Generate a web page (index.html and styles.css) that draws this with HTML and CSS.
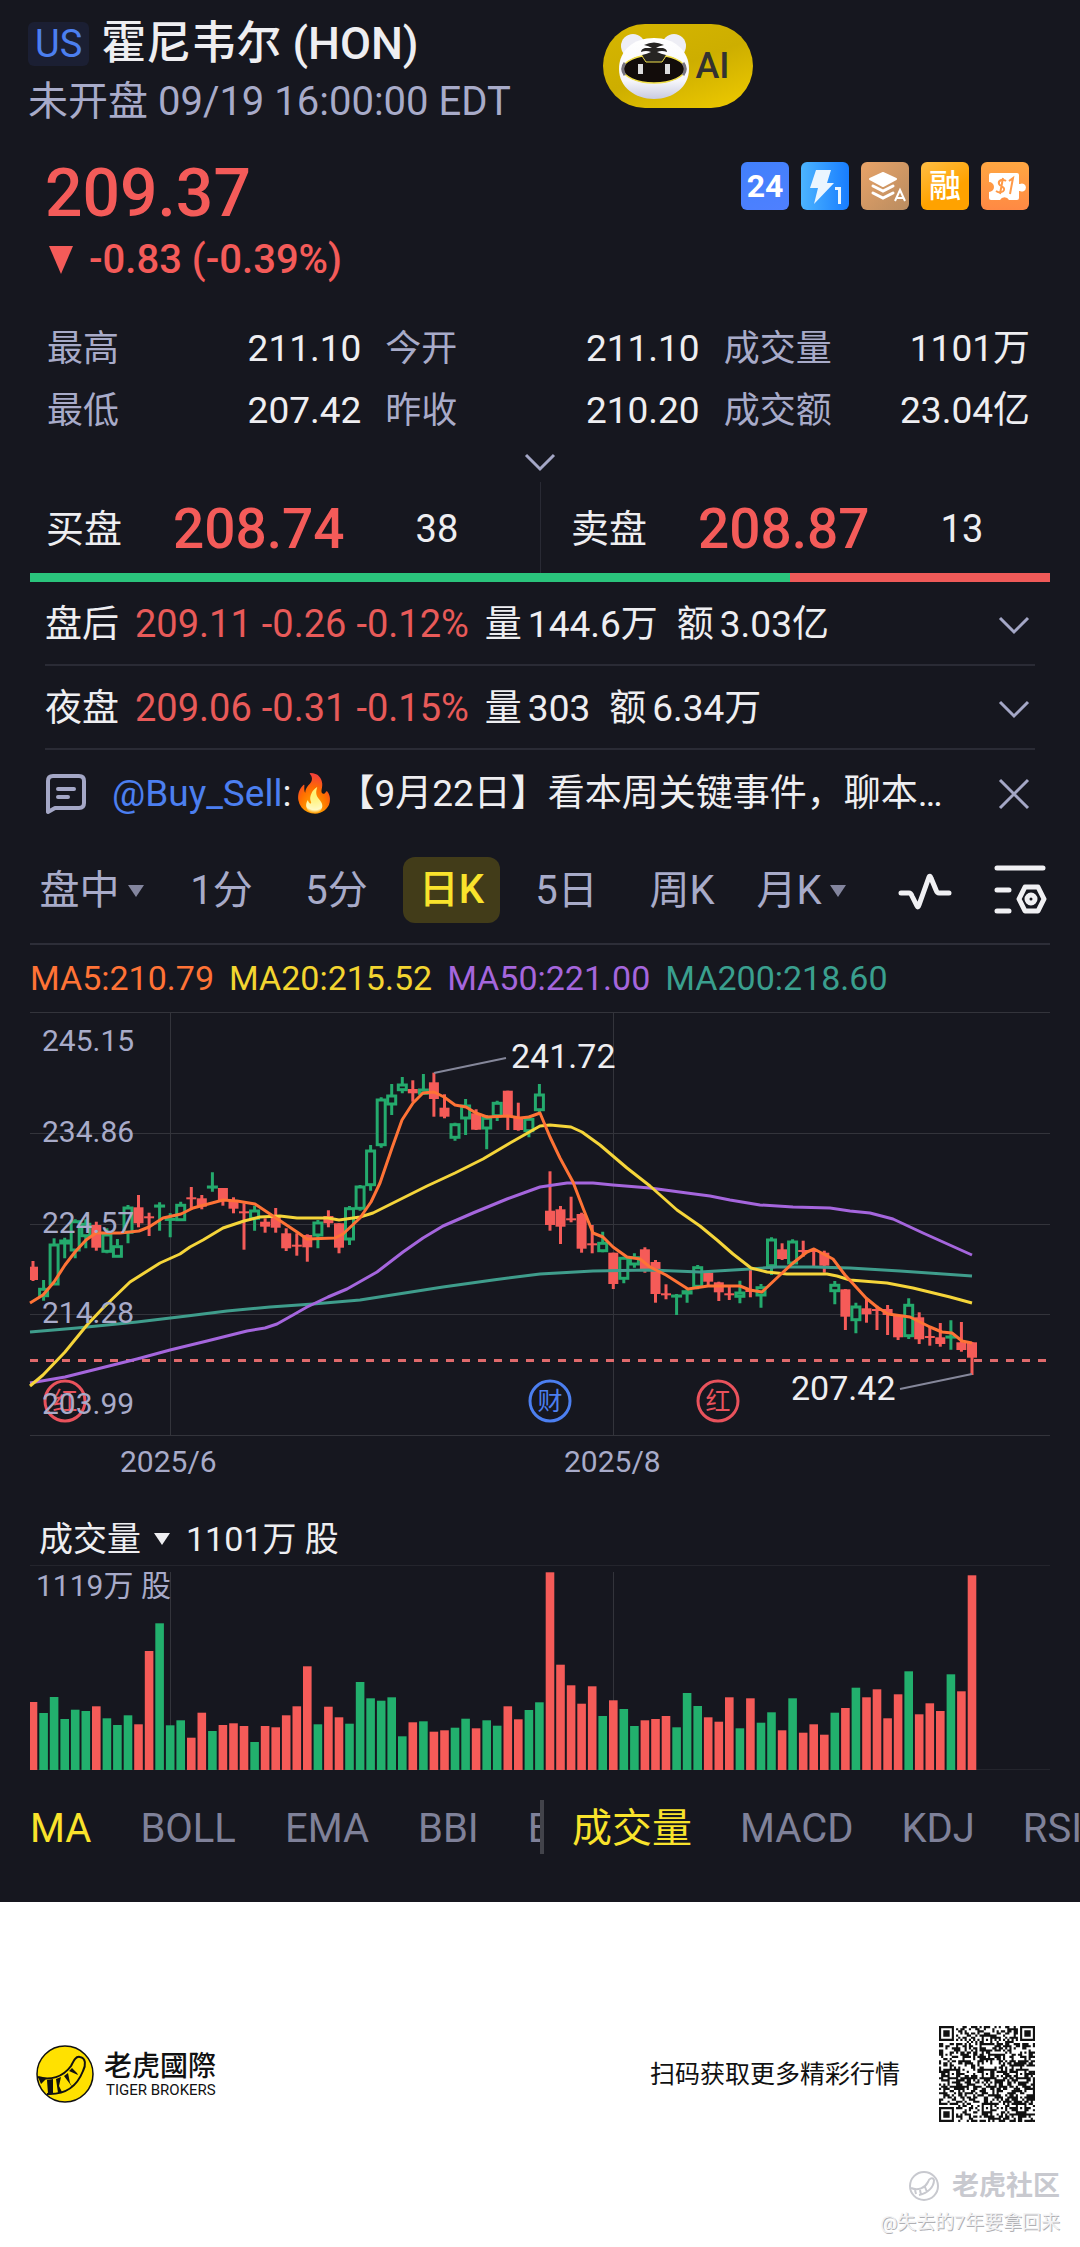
FILE: index.html
```html
<!DOCTYPE html>
<html lang="zh-CN">
<head>
<meta charset="utf-8">
<meta name="viewport" content="width=device-width, initial-scale=1">
<title>霍尼韦尔 (HON)</title>
<link rel="stylesheet" href="styles.css">
</head>
<body>
<main class="app">
  <header class="header">
    <div class="heading">
      <h1 class="title"><span class="market">US</span>霍尼韦尔 (HON)</h1>
      <p class="session">未开盘 09/19 16:00:00 EDT</p>
    </div>
    <button class="ai" type="button">
      <svg class="ai-face" viewBox="0 0 72 68" aria-hidden="true">
        <defs>
          <linearGradient id="fur" x1="0" y1="0" x2="0" y2="1"><stop offset="0" stop-color="#fff"/><stop offset=".7" stop-color="#f6f6fb"/><stop offset="1" stop-color="#c9cbe0"/></linearGradient>
        </defs>
        <circle cx="15" cy="14" r="12" fill="#eeeef5"/><circle cx="56" cy="14" r="12" fill="#eeeef5"/>
        <path d="M36 6c20 0 35 12 35 31 0 18-16 30-35 30S1 55 1 37C1 18 16 6 36 6z" fill="url(#fur)"/>
        <ellipse cx="36" cy="37" rx="31" ry="14" fill="#120c0a" stroke="#f1e04a" stroke-width="1.5"/>
        <path d="M7 31c-3 4-3 8 0 12M65 31c3 4 3 8 0 12" stroke="#77737c" stroke-width="3" fill="none"/>
        <path d="M24 24h24l-4 6H28z" fill="#222" stroke="#f1e04a" stroke-width="1"/>
        <path d="M26 13q10-5 20 0-5 1-8 3h7q4 1 4 4-5-2-10 0 4 2 9 3l-4 5H28l-4-5q5-1 9-3-5-2-10 0 0-3 4-4h7q-3-2-8-3z" fill="#262422"/>
        <path d="M20 32h5v10h-5zM47 32h5v10h-5z" fill="#dcdcdc"/>
      </svg>AI
    </button>
  </header>

  <section class="quote">
    <div>
      <p class="price">209.37</p>
      <p class="change"><svg class="drop" viewBox="0 0 26 30" aria-hidden="true"><path d="M1 1h24L13 29z"/></svg>-0.83 (-0.39%)</p>
    </div>
    <ul class="badges">
      <li class="badge badge-hours">24</li>
      <li class="badge badge-level">
        <svg viewBox="0 0 48 48" aria-hidden="true"><path d="M15 8h15l-4 13h7L13 42l4-16H9z" fill="#eaf5ff"/><path d="M34 25h6v17h-3V28h-3z" fill="#eaf5ff"/></svg>
      </li>
      <li class="badge badge-depth">
        <svg viewBox="0 0 48 48" aria-hidden="true"><path d="M22 11l13 6-13 7-13-7z" fill="#fff" stroke="#fff" stroke-width="2" stroke-linejoin="round"/><path d="M12 24l10 5 10-5M12 31l10 5 10-5" fill="none" stroke="#fff" stroke-width="3" stroke-linecap="round"/><path d="M34 39l5-11 5 11M36 36h6" fill="none" stroke="#fff" stroke-width="2"/></svg>
      </li>
      <li class="badge badge-margin">融</li>
      <li class="badge badge-fraction">
        <svg viewBox="0 0 48 48" aria-hidden="true"><path d="M8 13q0-2 2-2h26q2 0 2 2v9h1a4 4 0 1 1 0 7h-1v7q0 2-2 2h-8a5 5 0 0 0-9 0h-9q-2 0-2-2v-6a5 5 0 0 0 0-10z" fill="#fff"/><path d="M25 19c-4-3-8 0-7 3s6 2 5 6c-1 3-5 3-8 1M22 16l-3 16M28 19l4-3-3 16" fill="none" stroke="#ff9a48" stroke-width="2"/></svg>
      </li>
    </ul>
  </section>

  <dl class="stats">
    <div class="stat"><dt>最高</dt><dd>211.10</dd></div>
    <div class="stat"><dt>今开</dt><dd>211.10</dd></div>
    <div class="stat"><dt>成交量</dt><dd>1101万</dd></div>
    <div class="stat"><dt>最低</dt><dd>207.42</dd></div>
    <div class="stat"><dt>昨收</dt><dd>210.20</dd></div>
    <div class="stat"><dt>成交额</dt><dd>23.04亿</dd></div>
  </dl>
  <button class="icon-button expand" type="button" aria-label="展开"><svg class="chevron" viewBox="0 0 32 20" aria-hidden="true"><path d="M2 3l14 14L30 3"/></svg></button>

  <section class="book">
    <div class="side"><span class="side-name">买盘</span><span class="side-price">208.74</span><span class="side-size">38</span></div>
    <div class="side side-ask"><span class="side-name">卖盘</span><span class="side-price">208.87</span><span class="side-size">13</span></div>
  </section>
  <div class="ratio"><span class="ratio-bid" style="width:74.5%"></span></div>

  <section class="extra">
    <div class="row">
      <span>盘后</span><span class="down">209.11</span><span class="down">-0.26</span><span class="down">-0.12%</span>
      <span class="pair">量<b>144.6万</b></span><span class="pair">额<b>3.03亿</b></span>
      <button class="icon-button row-end" type="button" aria-label="展开盘后"><svg class="chevron" viewBox="0 0 32 20" aria-hidden="true"><path d="M2 3l14 14L30 3"/></svg></button>
    </div>
    <div class="row">
      <span>夜盘</span><span class="down">209.06</span><span class="down">-0.31</span><span class="down">-0.15%</span>
      <span class="pair">量<b>303</b></span><span class="pair">额<b>6.34万</b></span>
      <button class="icon-button row-end" type="button" aria-label="展开夜盘"><svg class="chevron" viewBox="0 0 32 20" aria-hidden="true"><path d="M2 3l14 14L30 3"/></svg></button>
    </div>
    <div class="row row-news">
      <svg class="note" viewBox="0 0 42 42" aria-hidden="true"><path d="M3 39V8q0-5 5-5h26q5 0 5 5v22q0 5-5 5H10l-7 4zM13 16h16M13 24h10"/></svg>
      <p class="news"><a href="#">@Buy_Sell</a>:🔥【9月22日】看本周关键事件，聊本…</p>
      <button class="icon-button row-end" type="button" aria-label="关闭"><svg class="close" viewBox="0 0 32 32" aria-hidden="true"><path d="M2 2l28 28M30 2L2 30"/></svg></button>
    </div>
  </section>

  <nav class="periods">
    <button class="period" type="button">盘中<i class="caret"></i></button>
    <button class="period" type="button">1分</button>
    <button class="period" type="button">5分</button>
    <button class="period period-on" type="button"><span>日K</span></button>
    <button class="period" type="button">5日</button>
    <button class="period" type="button">周K</button>
    <button class="period" type="button">月K<i class="caret"></i></button>
    <button class="icon-button" type="button" aria-label="画线"><svg class="tool" viewBox="0 0 54 54" aria-hidden="true"><path d="M3 30h8q2 0 3 3l5 10q1 2 2-1l10-28q1-2 2 1l5 12q1 3 3 3h10"/></svg></button>
    <button class="icon-button" type="button" aria-label="设置"><svg class="tool" viewBox="0 0 54 54" aria-hidden="true"><path d="M4 5h46M4 27h12M4 48h12M32 24h13l6 12-6 12H32l-6-12z"/><circle cx="38" cy="36" r="4"/></svg></button>
  </nav>

  <section class="chart">
    <ul class="averages">
      <li class="ma5">MA5:210.79</li><li class="ma20">MA20:215.52</li><li class="ma50">MA50:221.00</li><li class="ma200">MA200:218.60</li>
    </ul>
    <svg class="plot" viewBox="0 0 1020 476" role="img" aria-label="日K线图">
      <path class="grid" d="M0 .5H1020M0 121.5H1020M0 212.5H1020M0 302.5H1020M0 423.5H1020M140.5 0V423M583.5 0V423"/>
      <g id="candles"></g>
      <path class="last" d="M0 348.5H1020"/>
      <g class="lines">
        <polyline class="l200" points="0,320 47,316 107,310 157,304 197,299 240,295 283,292 330,288 413,275 463,268 510,262 563,259 620,258 670,260 720,257 747,255 783,255 820,256 870,259 942,264"/>
        <polyline class="l50" points="0,371 35,365 67,357 107,347 140,338 177,329 217,319 235,316 247,312 263,303 277,295 298,285 317,277 347,260 373,240 393,226 413,214 443,201 477,187 510,175 537,171 563,171 583,173 620,176 657,181 680,184 700,188 730,193 763,195 800,196 820,199 840,201 863,207 893,221 942,243"/>
        <polyline class="l20" points="0,374 13,363 35,340 57,313 73,296 100,270 130,251 150,242 160,235 173,228 193,216 214,209 230,205 250,204 267,206 298,206 309,208 330,205 343,201 367,189 397,174 425,161 453,147 480,131 510,114 520,113 541,115 552,120 570,133 597,156 620,174 647,198 670,214 687,228 703,242 721,256 737,260 757,262 797,262 807,264 820,268 857,271 883,276 920,285 942,291"/>
        <polyline class="l5" points="0,291 13,283 24,270 35,253 45,240 56,228 66,221 77,221 90,221 109,219 119,215 133,206 151,202 163,196 182,191 193,188 207,189 225,192 246,206 267,220 277,227 305,226 313,222 330,206 341,190 350,171 362,136 372,108 383,91 393,81 404,80 414,85 425,93 436,95 446,101 457,105 478,104 490,106 499,105 510,101 520,125 530,146 543,170 553,196 563,221 573,225 583,235 597,245 610,247 620,255 636,263 647,270 658,277 678,274 710,274 720,278 732,280 750,263 763,251 777,240 784,237 803,247 815,263 826,275 836,286 847,295 858,302 880,305 900,315 912,320 922,321 932,329 942,331"/>
      </g>
      <path class="leader" d="M404 61L476 46M870 377L942 362"/>
      <text class="mark" x="481" y="56">241.72</text>
      <text class="mark" x="761" y="388">207.42</text>
      <g class="event"><circle cx="35" cy="389" r="20"/><text x="35" y="398">红</text></g>
      <g class="event event-report"><circle cx="520" cy="389" r="20"/><text x="520" y="398">财</text></g>
      <g class="event"><circle cx="688" cy="389" r="20"/><text x="688" y="398">红</text></g>
      <g class="axis">
        <text x="12" y="39">245.15</text><text x="12" y="130">234.86</text><text x="12" y="221">224.57</text><text x="12" y="311">214.28</text><text x="12" y="402">203.99</text>
        <text x="90" y="460">2025/6</text><text x="534" y="460">2025/8</text>
      </g>
    </svg>
    <button class="volume-head" type="button">成交量<i class="caret"></i>1101万 股</button>
    <svg class="plot" viewBox="0 0 1020 206" role="img" aria-label="成交量">
      <path class="grid grid-dim" d="M0 .5H1020M0 204.5H1020"/>
      <path class="grid" d="M140.5 7V205M583.5 7V205"/>
      <g id="volumes"></g>
      <g class="axis"><text x="6" y="31">1119万 股</text></g>
    </svg>
  </section>

  <nav class="indicators">
    <div class="group">
      <button class="indicator indicator-on" type="button">MA</button><button class="indicator" type="button">BOLL</button><button class="indicator" type="button">EMA</button><button class="indicator" type="button">BBI</button><button class="indicator" type="button">BIAS</button>
    </div>
    <div class="group group-sub">
      <button class="indicator indicator-on" type="button">成交量</button><button class="indicator" type="button">MACD</button><button class="indicator" type="button">KDJ</button><button class="indicator" type="button">RSI</button>
    </div>
  </nav>
</main>

<footer class="footer">
  <div class="share">
    <svg class="logo" viewBox="0 0 58 58" aria-hidden="true">
      <circle cx="29" cy="29" r="28" fill="#ffe100" stroke="#111" stroke-width="1.5"/>
      <path d="M2 32c12 4 25 0 33-11 3-6 5-10 9-9 6 1 6 8 3 14C41 41 29 50 11 49" fill="none" stroke="#111" stroke-width="2"/>
      <path d="M2 32l8 2-5 5zM11 35l6-1v15h-5zM20 34l5-2-2 9 3 6-4 1zM28 31l4-3 2 10 3 5zM33 26l3-3 5 5 1 2z" fill="#111"/>
    </svg>
    <div class="brand"><strong>老虎國際</strong><small>TIGER BROKERS</small></div>
    <p class="scan">扫码获取更多精彩行情</p>
    <svg class="qr" viewBox="0 0 45 45" role="img" aria-label="二维码"><path id="qr-cells"/></svg>
  </div>
  <div class="credit">
    <p class="community"><svg class="community-logo" viewBox="0 0 32 32" aria-hidden="true"><circle cx="16" cy="16" r="14"/><path d="M3 18c7 3 14 0 17-6 1-4 5-5 6-2 0 7-6 13-15 15M7 20l1 4M12 20l1 5M17 17l2 5"/></svg>老虎社区</p>
    <p class="author">@失去的7年要拿回来</p>
  </div>
</footer>
<script src="chart.js"></script>
</body>
</html>
```
FILE: styles.css
```css
* { box-sizing: border-box; }
body, h1, p, ul, dl, dd { margin: 0; padding: 0; }
ul { list-style: none; }
body {
  background: #fff;
  font-family: Roboto, "Noto Sans CJK SC", sans-serif;
  font-size: 37px;
  line-height: 1.25;
}
button {
  padding: 0;
  border: 0;
  background: none;
  color: inherit;
  font: inherit;
  white-space: nowrap;
}
svg { display: block; }

.app {
  background: #16171f;
  color: #eeeef1;
  padding-bottom: 48px;
  overflow: hidden;
}

/* Header */
.header { display: flex; align-items: flex-start; gap: 2px; padding: 14px 28px 0; }
.heading { flex: 0 0 56%; white-space: nowrap; }
.title {
  display: flex;
  align-items: center;
  gap: 12px;
  font-size: 45px;
  font-weight: 500;
  line-height: 60px;
}
.market {
  padding: 0 7px;
  border-radius: 6px;
  background: #1b1f33;
  color: #4c7ff0;
  font-size: 38px;
  font-weight: 400;
  line-height: 44px;
}
.session { color: #a8abc9; font-size: 40px; line-height: 56px; }
.ai {
  display: flex;
  align-items: center;
  gap: 5px;
  height: 84px;
  margin-top: 10px;
  padding: 0 23px 0 15px;
  border-radius: 42px;
  background: linear-gradient(160deg, #d6b600, #cdae00 50%, #efcb00);
  color: #333230;
  font-size: 36px;
  font-weight: 500;
}
.ai-face { width: 72px; }

/* Last price */
.quote { display: flex; justify-content: space-between; padding: 26px 51px 0 45px; color: #f45b59; font-weight: 500; }
.price { font-size: 66px; line-height: 76px; }
.change { display: flex; align-items: center; gap: 15px; font-size: 40px; line-height: 56px; }
.drop { width: 26px; margin-left: 3px; fill: currentColor; }
.badges { display: flex; gap: 12px; margin-top: 6px; }
.badge {
  width: 48px;
  height: 48px;
  border-radius: 6px;
  color: #fff;
  font-size: 32px;
  font-weight: 500;
  line-height: 48px;
  text-align: center;
}
.badge-hours { background: linear-gradient(160deg, #4180fb, #4f80ff); font-weight: 700; }
.badge-level { background: linear-gradient(90deg, #4cb4ff, #187dff); }
.badge-depth { background: linear-gradient(135deg, #e8a368, #b98c60); }
.badge-margin { background: linear-gradient(150deg, #ffbe45, #ffa200 60%); }
.badge-fraction { background: linear-gradient(#ffa742, #ff8944); }

/* Day figures */
.stats {
  display: grid;
  grid-template-columns: 314fr 314fr 306fr;
  column-gap: 24px;
  padding: 30px 50px 0 47px;
  line-height: 62px;
}
.stat { display: flex; justify-content: space-between; }
.stat dt { color: #a8abc9; font-size: 36px; }
.icon-button { display: flex; align-items: center; justify-content: center; }
.chevron { width: 32px; }
.chevron, .close, .note { fill: none; stroke: #a4a7c6; stroke-width: 3; }
.expand { width: 100%; height: 40px; }

/* Best bid and ask */
.book { display: grid; grid-template-columns: 1fr 1fr; }
.side { display: flex; align-items: center; height: 91px; padding: 4px 0 0 46px; }
.side-ask { padding-left: 30px; border-left: 1px solid #292a34; }
.side-name { margin-right: 51px; font-size: 38px; }
.side-price { margin-right: 71px; color: #f45b59; font-size: 55px; font-weight: 500; }
.side-size { font-size: 38px; }
.ratio { display: flex; height: 9px; margin: 0 30px; background: #ef5a58; }
.ratio-bid { background: #2ac47c; }

/* Extended sessions and news */
.extra { padding: 0 45px; }
.row {
  display: flex;
  align-items: center;
  gap: 16px;
  height: 84px;
  padding-top: 4px;
  border-bottom: 2px solid #2a2b35;
  white-space: nowrap;
}
.row-news { height: 86px; padding-top: 2px; border: 0; gap: 25px; }
.down { color: #e85a59; font-size: 38px; }
.down + .down { margin-left: -6px; }
.pair { display: flex; gap: 6px; margin-right: 3px; }
.pair b { font-weight: 400; }
.row-end { flex: none; margin-left: auto; margin-right: 5px; }
.close { width: 32px; }
.note { flex: none; width: 42px; stroke-width: 4; stroke-linejoin: round; stroke-linecap: round; }
.news { overflow: hidden; }
.news a { color: #4c7ff0; text-decoration: none; }

/* Chart periods */
.periods {
  display: grid;
  grid-template-columns: 145fr 115fr 115fr 115fr 115fr 116fr 122fr 126fr 63fr;
  align-items: center;
  height: 107px;
  padding: 0 29px 0 19px;
  color: #a8abc9;
  font-size: 40px;
}
.period { display: flex; align-items: center; justify-content: center; padding-top: 2px; }
.period span { padding: 0 16px; border-radius: 12px; background: #423c19; line-height: 66px; }
.period-on { padding-top: 0; color: #f9e32c; font-weight: 500; }
.caret { border: 8px solid transparent; border-top: 12px solid currentColor; border-bottom: 0; }
.period .caret { margin-left: 8px; opacity: .75; }
.tool { width: 54px; fill: none; stroke: #f0f0f3; stroke-width: 5; stroke-linecap: round; stroke-linejoin: round; }

/* Charts */
.chart { margin: 0 30px; border-top: 2px solid #2d2e38; }
.averages { display: flex; gap: 15px; font-size: 34px; line-height: 67px; white-space: nowrap; }
.ma5 { color: #ff7336; }
.ma20 { color: #f3d530; }
.ma50 { color: #a566dd; }
.ma200 { color: #3a9f8e; }
.plot { width: 100%; height: auto; overflow: visible; }
.grid { fill: none; stroke: #33343b; stroke-width: 1; }
.grid-dim { stroke: #24252d; }
.lines { fill: none; stroke-width: 3; stroke-linejoin: round; }
.l5 { stroke: #ff7336; }
.l20 { stroke: #f5d53a; }
.l50 { stroke: #a566dd; }
.l200 { stroke: #3f9d8c; }
.last { stroke: #e06a6c; stroke-width: 3; stroke-dasharray: 8 8; }
.leader { fill: none; stroke: #85879a; stroke-width: 2; }
.axis { fill: #a8abc9; font-size: 30px; }
.mark { fill: #eeeef1; font-size: 34px; }
.event circle { fill: none; stroke: #e9525c; stroke-width: 3; }
.event text { fill: #e9525c; font-size: 25px; text-anchor: middle; }
.event-report circle { stroke: #4c7ff0; }
.event-report text { fill: #4c7ff0; }
.up-body { fill: #16171f; stroke: #24aa6d; stroke-width: 3; }
.up-wick { stroke: #24aa6d; stroke-width: 3; }
.down-body { fill: #f55b58; }
.down-wick { stroke: #f55b58; stroke-width: 3; }
.up-bar { fill: #22b06d; }
.volume-head { display: flex; align-items: center; height: 52px; margin: 25px 0 0 9px; font-size: 34px; }
.volume-head .caret { margin: 0 16px 0 13px; }

/* Indicator pickers */
.indicators { display: grid; grid-template-columns: 1fr 1fr; margin-top: 29px; }
.group { display: flex; gap: 49px; height: 54px; min-width: 0; padding: 4px 0 0 30px; overflow: hidden; font-size: 40px; color: #7f8199; }
.group-sub { gap: 48px; padding-left: 28px; border-left: 4px solid #42434a; }
.indicator-on { color: #f9e32c; }

/* Share footer */
.footer { padding: 124px 20px 8px 36px; color: #111; }
.share { display: flex; align-items: center; padding-right: 25px; }
.logo { width: 58px; }
.brand { display: flex; flex-direction: column; margin: 0 auto 0 10px; }
.brand strong { font-family: "Noto Sans CJK TC", sans-serif; font-size: 28px; font-weight: 500; line-height: 32px; }
.brand small { padding-left: 2px; font-size: 15px; line-height: 20px; }
.scan { margin-right: 39px; padding-top: 2px; font-size: 25px; }
.qr { width: 96px; fill: #111; }
.credit { padding-top: 44px; text-align: right; }
.community { display: flex; align-items: center; justify-content: flex-end; gap: 12px; color: #c8c9cf; font-size: 27px; font-weight: 700; line-height: 40px; }
.community-logo { width: 32px; fill: none; stroke: currentColor; stroke-width: 2; }
.author { color: #f3f3f4; font-size: 19px; line-height: 34px; text-shadow: 1px 1px 0 #b0b0b4; }
```
FILE: chart.js
```js
// Candles: direction, high, body top, body bottom, low, in thirds of a plot unit.
const candles = [
  'R 963 980 1020 1023', 'G 1020 1045 1070 1082', 'G 895 912 1035 1035', 'G 893 900 912 955', 'G 838 842 933 955',
  'G 838 850 890 925', 'R 845 855 923 932', 'G 865 882 937 940', 'G 897 917 952 952', 'G 795 801 880 910',
  'R 765 802 850 862', 'R 818 829 835 888', 'G 787 795 799 872', 'G 820 835 840 892', 'G 785 793 842 843',
  'R 741 772 776 808', 'R 765 775 800 808', 'G 697 738 742 755', 'R 744 744 780 797', 'R 772 780 806 820',
  'R 790 814 820 929', 'G 797 810 838 872', 'R 835 845 860 878', 'R 804 825 863 878', 'R 865 880 925 933',
  'R 880 914 920 947', 'R 883 885 922 965', 'G 840 846 888 925', 'R 811 828 850 862', 'R 850 850 923 940',
  'G 798 803 900 915', 'G 735 738 808 812', 'G 615 630 737 752', 'G 472 477 617 623', 'G 432 465 495 525',
  'G 411 432 452 460', 'R 421 447 460 485', 'G 402 447 463 465', 'R 398 427 477 530', 'R 463 503 530 535',
  'G 548 551 595 602', 'G 477 495 537 585', 'R 508 520 569 570', 'G 525 532 567 628', 'G 482 487 530 543',
  'R 452 452 530 570', 'R 488 533 570 572', 'G 527 535 575 592', 'G 432 462 512 517', 'R 694 812 855 872',
  'R 798 808 860 912', 'R 770 835 841 847', 'R 818 822 926 938', 'R 855 910 916 940', 'G 875 907 935 937',
  'R 938 938 1032 1047', 'G 950 952 1018 1030', 'G 940 950 975 983', 'R 922 928 990 998', 'R 960 966 1062 1088',
  'R 1033 1060 1066 1078', 'G 1062 1065 1070 1125', 'G 1046 1052 1062 1088', 'G 975 980 1042 1048', 'R 992 998 1025 1040',
  'R 1025 1027 1057 1083', 'R 1035 1060 1066 1080', 'G 1022 1056 1072 1090', 'R 985 1050 1056 1072', 'G 1032 1040 1068 1103',
  'G 892 897 980 1005', 'R 910 928 957 960', 'G 898 903 972 975', 'R 902 930 936 950', 'R 925 930 935 980',
  'R 932 938 977 998', 'G 1023 1033 1055 1093', 'R 1047 1048 1130 1170', 'G 1088 1098 1142 1180', 'R 1075 1105 1123 1148',
  'R 1097 1107 1112 1170', 'R 1095 1107 1125 1185', 'R 1125 1127 1192 1200', 'G 1075 1093 1190 1197', 'R 1117 1132 1198 1212',
  'R 1160 1188 1193 1217', 'R 1149 1192 1212 1220', 'G 1141 1188 1193 1229', 'R 1146 1207 1230 1235', 'R 1206 1207 1253 1305'
].map(line => line.split(' '));

// Bar heights of the volume plot, one for each candle, in thirds of a plot unit.
const volumes = [
  204, 171, 219, 153, 181, 177, 191, 155, 135, 164, 137, 357, 440, 134, 149, 97, 172, 117, 135, 140,
  132, 84, 132, 128, 164, 191, 311, 137, 190, 158, 139, 264, 215, 208, 218, 101, 143, 146, 115, 119,
  127, 154, 125, 149, 133, 191, 152, 180, 203, 593, 316, 254, 199, 251, 162, 209, 183, 132, 149, 153,
  162, 128, 231, 192, 158, 145, 218, 125, 215, 142, 173, 119, 215, 112, 137, 106, 172, 186, 247, 218,
  242, 155, 227, 296, 167, 200, 177, 287, 236, 584
];

const step = 10.55;
const start = 3;
const round = n => Math.round(n * 10) / 10;
const y = v => round(v / 3 - 72);

document.getElementById('candles').innerHTML = candles.map(([dir, ...v], i) => {
  const x = round(start + i * step);
  const [high, top, bottom, low] = v.map(y);
  const left = Math.max(x - 5, 0);
  if (dir === 'R') {
    return `<path class="down-wick" d="M${x} ${high}V${low}"/>` +
      `<rect class="down-body" x="${left}" y="${top}" width="${x + 5 - left}" height="${Math.max(bottom - top, 2)}"/>`;
  }
  return `<path class="up-wick" d="M${x} ${high}V${top}M${x} ${bottom}V${low}"/>` +
    `<rect class="up-body" x="${x - 4}" y="${top + 1}" width="8" height="${Math.max(bottom - top - 2, 0.1)}"/>`;
}).join('');

document.getElementById('volumes').innerHTML = volumes.map((v, i) => {
  const x = start + i * step;
  const left = Math.max(x - 4.3, 0);
  const height = v / 3;
  const cls = candles[i][0] === 'R' ? 'down-body' : 'up-bar';
  return `<rect class="${cls}" x="${round(left)}" y="${round(205 - height)}" width="${round(x + 4.3 - left)}" height="${round(height)}"/>`;
}).join('');

// Code cells: finder, alignment and timing patterns around a fixed data field.
const size = 45;
const near = (a, b, cx, cy) => Math.max(Math.abs(a - cx), Math.abs(b - cy));
let seed = 20250919;
const bit = () => {
  seed = (seed * 1103515245 + 12345) % 2147483648;
  return seed / 2147483648 < 0.52;
};
let cells = '';
for (let r = 0; r < size; r++) {
  for (let c = 0; c < size; c++) {
    let on = bit();
    if (r === 6 || c === 6) on = (r + c) % 2 === 0;
    for (const [cx, cy] of [[22, 6], [6, 22], [22, 22], [38, 22], [22, 38], [38, 38]]) {
      const d = near(c, r, cx, cy);
      if (d <= 2) on = d !== 1;
    }
    for (const [cx, cy] of [[3, 3], [41, 3], [3, 41]]) {
      const d = near(c, r, cx, cy);
      if (d <= 4) on = d !== 2 && d !== 4;
    }
    if (on) cells += `M${c} ${r}h1v1h-1z`;
  }
}
document.getElementById('qr-cells').setAttribute('d', cells);
```
